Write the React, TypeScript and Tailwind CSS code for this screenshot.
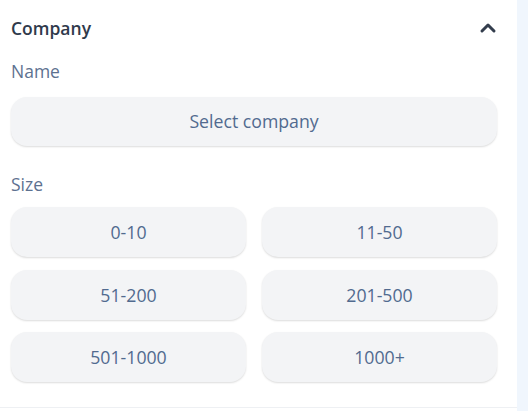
import { ChevronUp } from "lucide-react";

const sizes = ["0-10", "11-50", "51-200", "201-500", "501-1000", "1000+"];

const App = () => {
  return (
    <div
      className="flex w-[528px] h-[411px] bg-[#f0f6fd]"
      style={{ fontFamily: '"Open Sans", "Liberation Sans", sans-serif' }}
    >
      <div className="w-[517px] h-full bg-white">
        <div className="pl-[11px] pr-[20px] pt-[16px] pb-[25px] border-b border-[#eef0f3]">
          {/* header */}
          <div className="flex items-center justify-between h-[24px]">
            <span className="text-[17.5px] font-semibold text-[#2f3a4b]">Company</span>
            <ChevronUp className="w-6 h-6 text-[#333d4d] -mr-[3px]" strokeWidth={3} />
          </div>

          <div className="mt-[19px] h-[24px] leading-[24px] text-[17.5px] text-[#5d7190]">Name</div>
          <button className="mt-[14px] w-full h-[49px] rounded-2xl bg-[#f3f4f6] shadow-[0_1px_2px_rgba(0,0,0,0.14)] text-[17.7px] leading-[24px] text-[#516a8f] pb-[2px]">
            Select company
          </button>

          <div className="mt-[26px] h-[24px] leading-[24px] text-[17.5px] text-[#5d7190]">Size</div>
          <div className="mt-[11px] grid grid-cols-2 gap-x-[16px] gap-y-[12.5px]">
            {sizes.map((s) => (
              <button
                key={s}
                className="h-[50px] rounded-2xl bg-[#f3f4f6] shadow-[0_1px_2px_rgba(0,0,0,0.14)] text-[17.7px] leading-[24px] text-[#516a8f]"
              >
                {s}
              </button>
            ))}
          </div>
        </div>
      </div>
    </div>
  );
};

export default App;
